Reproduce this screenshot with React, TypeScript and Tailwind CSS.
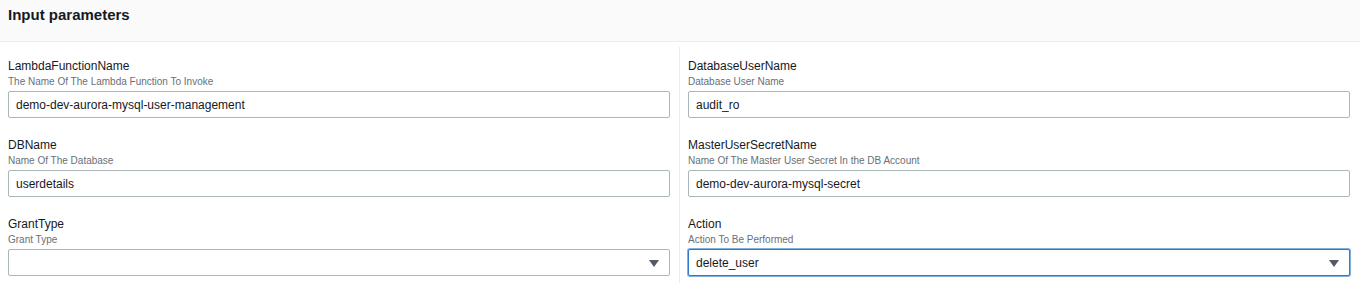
import React from "react";

interface Field {
  name: string;
  description: string;
  value: string;
  select?: boolean;
  focused?: boolean;
}

const leftFields: Field[] = [
  { name: "LambdaFunctionName", description: "The Name Of The Lambda Function To Invoke", value: "demo-dev-aurora-mysql-user-management" },
  { name: "DBName", description: "Name Of The Database", value: "userdetails" },
  { name: "GrantType", description: "Grant Type", value: "", select: true },
];

const rightFields: Field[] = [
  { name: "DatabaseUserName", description: "Database User Name", value: "audit_ro" },
  { name: "MasterUserSecretName", description: "Name Of The Master User Secret In the DB Account", value: "demo-dev-aurora-mysql-secret" },
  { name: "Action", description: "Action To Be Performed", value: "delete_user", select: true, focused: true },
];

const ParamField: React.FC<{ field: Field; last?: boolean }> = ({ field, last }) => {
  return (
    <div className={last ? "" : "mb-[18px]"}>
      <div className="pt-[1px] text-[12px] leading-4 text-[#16191f]">{field.name}</div>
      <div className="mt-[1px] text-[10px] leading-[14px] text-[#687078]">{field.description}</div>
      <div
        className={
          "relative mt-[2px] flex h-[27px] items-center rounded-[2px] border bg-white pl-[7px] text-[12px] text-[#16191f] " +
          (field.focused
            ? "border-[#2f7bc6] ring-1 ring-[#2f7bc6]/60"
            : "border-[#aab7b8]")
        }
      >
        <span>{field.value}</span>
        {field.select && (
          <svg className="absolute right-[10px] top-[10px]" width="10" height="7" viewBox="0 0 10 7">
            <path d="M0 0 L10 0 L5 7 Z" fill="#545b64" />
          </svg>
        )}
      </div>
    </div>
  );
};

export default function App() {
  return (
    <div className="h-[290px] w-[1360px] bg-white" style={{ fontFamily: '"Liberation Sans", Arial, sans-serif' }}>
      <div className="h-[42px] border-b border-[#eaeded] bg-[#fafafa] px-2 pt-[5px]">
        <h2 className="text-[15px] font-bold leading-5 text-[#16191f]">Input parameters</h2>
      </div>
      <div className="mt-[5px] flex">
        <div className="w-[679px] pb-[7px] pl-2 pr-[9px] pt-[10px]">
          {leftFields.map((f, i) => (
            <ParamField key={f.name} field={f} last={i === leftFields.length - 1} />
          ))}
        </div>
        <div className="flex-1 border-l border-[#eaeded] pb-[7px] pl-2 pr-[10px] pt-[10px]">
          {rightFields.map((f, i) => (
            <ParamField key={f.name} field={f} last={i === rightFields.length - 1} />
          ))}
        </div>
      </div>
    </div>
  );
}
